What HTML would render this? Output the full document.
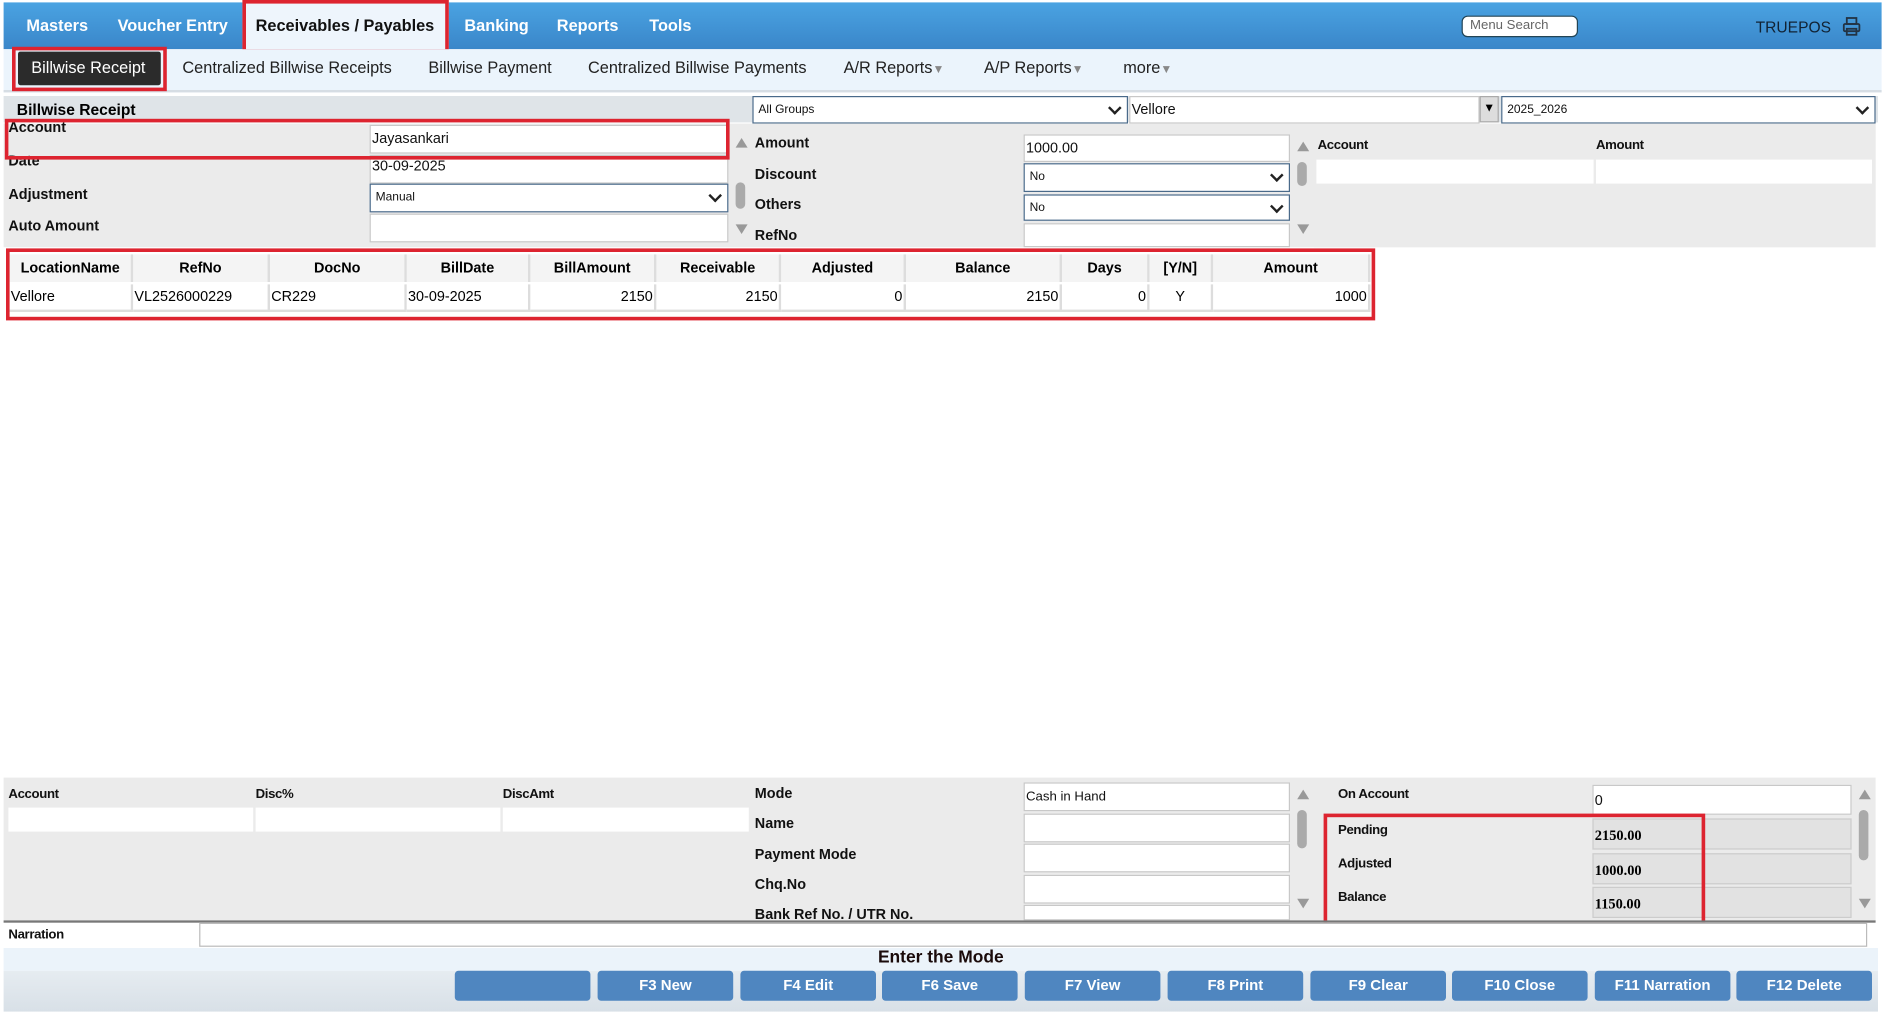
<!DOCTYPE html>
<html><head><meta charset="utf-8"><style>
*{box-sizing:border-box;margin:0;padding:0}
html,body{width:1882px;height:1012px;overflow:hidden;background:#fff;font-family:"Liberation Sans",Arial,sans-serif}
#w{position:absolute;left:0;top:0;width:1568px;height:843px;transform:scale(1.2);transform-origin:0 0;background:#fff}
.a{position:absolute}
.nav{color:#fff;font-weight:bold;font-size:13.6px;top:14px}
.sub{font-size:13.6px;color:#222;top:49px}
.lb{font-size:12px;font-weight:bold;color:#111}
.sl{font-size:11px;font-weight:bold;color:#111;letter-spacing:-0.3px}
.in{background:#fff;border:1px solid #c8c8c8;font-size:12px;padding:3px 1px;color:#111}
.sel{background:#fff;border:1px solid #4a6a8a;font-size:10px;padding:5px 4px;color:#111}
.sel:after{content:"";position:absolute;right:6px;top:5px;width:6px;height:6px;border-right:2px solid #222;border-bottom:2px solid #222;transform:rotate(45deg)}
.red{border:3px solid #dd2430}
.sb{position:absolute;width:10px}
.up,.dn{position:absolute;left:1px;width:0;height:0;border-left:5px solid transparent;border-right:5px solid transparent}
.up{border-bottom:8px solid #999}.dn{border-top:8px solid #999}
.th{position:absolute;top:212px;height:23px;background:#f4f4f4;border-right:2px solid #ddd;font-size:12px;font-weight:bold;text-align:center;line-height:23px}
.td{position:absolute;top:237px;height:23px;background:#fff;border-right:2px solid #ddd;border-bottom:2px solid #ddd;font-size:12px;line-height:20px;padding:0 1px}
.btn{position:absolute;top:809px;width:113px;height:25px;background:#4f86c0;border-radius:3px;color:#fff;font-weight:bold;font-size:12.5px;text-align:center;line-height:25px}
</style></head><body><div id="w">
<div class="a" style="left:3px;top:2px;width:1565px;height:39px;background:linear-gradient(#4aa3e2,#3a86c9)"></div>
<div class="a nav" style="left:22px">Masters</div>
<div class="a nav" style="left:98px">Voucher Entry</div>
<div class="a red" style="left:202px;top:0;width:172px;height:44px;background:#eef5fc"></div>
<div class="a nav" style="left:213px;color:#111">Receivables / Payables</div>
<div class="a nav" style="left:387px">Banking</div>
<div class="a nav" style="left:464px">Reports</div>
<div class="a nav" style="left:541px">Tools</div>
<div class="a" style="left:1218px;top:13px;width:97px;height:18px;background:#fff;border:1px solid #245;border-radius:5px;font-size:11px;color:#666;padding:1px 6px">Menu Search</div>
<div class="a" style="left:1463px;top:15px;font-size:13px;color:#123">TRUEPOS</div>
<svg class="a" style="left:1535px;top:14px" width="16" height="16" viewBox="0 0 16 16" fill="none" stroke="#234" stroke-width="1.5"><rect x="4" y="1" width="8" height="5"/><rect x="1.5" y="6" width="13" height="6" rx="1"/><rect x="4" y="10" width="8" height="5"/></svg>
<div class="a" style="left:3px;top:41px;width:1565px;height:36px;background:#ebf4fc;border-bottom:2px solid #d6dde4"></div>
<div class="a red" style="left:10px;top:39px;width:129px;height:37px"></div>
<div class="a" style="left:15px;top:43px;width:119px;height:28px;background:#2b2b2b;border-radius:2px"></div>
<div class="a sub" style="left:26px;color:#fff">Billwise Receipt</div>
<div class="a sub" style="left:152px">Centralized Billwise Receipts</div>
<div class="a sub" style="left:357px">Billwise Payment</div>
<div class="a sub" style="left:490px">Centralized Billwise Payments</div>
<div class="a sub" style="left:703px">A/R Reports<span style="color:#888;font-size:10px">▼</span></div>
<div class="a sub" style="left:820px">A/P Reports<span style="color:#888;font-size:10px">▼</span></div>
<div class="a sub" style="left:936px">more<span style="color:#888;font-size:10px">▼</span></div>
<div class="a" style="left:3px;top:80px;width:1562px;height:22px;background:#dfe4e8"></div>
<div class="a" style="left:14px;top:84px;font-size:13px;font-weight:bold">Billwise Receipt</div>
<div class="a sel" style="left:627px;top:80px;width:313px;height:23px">All Groups</div>
<div class="a in" style="left:941px;top:80px;width:292px;height:23px">Vellore</div>
<div class="a" style="left:1233px;top:80px;width:16px;height:22px;background:#ddd;border:1px solid #aaa;font-size:10px;text-align:center;line-height:20px">▼</div>
<div class="a sel" style="left:1251px;top:80px;width:312px;height:23px">2025_2026</div>
<div class="a" style="left:3px;top:103px;width:1560px;height:103px;background:#ebebeb"></div>
<div class="a" style="left:7px;top:102px;height:14px;overflow:hidden"><div class="lb" style="margin-top:-3px">Account</div></div>
<div class="a" style="left:7px;top:129px;height:14px;overflow:hidden"><div class="lb" style="margin-top:-2px">Date</div></div>
<div class="a lb" style="left:7px;top:155px">Adjustment</div>
<div class="a lb" style="left:7px;top:181px">Auto Amount</div>
<div class="a in" style="left:308px;top:104px;width:299px;height:24px">Jayasankari</div>
<div class="a in" style="left:308px;top:129px;width:299px;height:24px;padding-top:1px">30-09-2025</div>
<div class="a sel" style="left:308px;top:153px;width:299px;height:24px">Manual</div>
<div class="a in" style="left:308px;top:178px;width:299px;height:24px"></div>
<div class="a red" style="left:4px;top:99px;width:604px;height:34px"></div>
<div class="sb" style="left:612px;top:115px;height:80px"><div class="up" style="top:0"></div><div style="position:absolute;left:1px;top:37px;width:8px;height:22px;background:#aaa;border-radius:4px"></div><div class="dn" style="top:72px"></div></div>
<div class="a lb" style="left:629px;top:112px">Amount</div>
<div class="a lb" style="left:629px;top:138px">Discount</div>
<div class="a lb" style="left:629px;top:163px">Others</div>
<div class="a lb" style="left:629px;top:189px">RefNo</div>
<div class="a in" style="left:853px;top:112px;width:222px;height:23px">1000.00</div>
<div class="a sel" style="left:853px;top:136px;width:222px;height:24px">No</div>
<div class="a sel" style="left:853px;top:162px;width:222px;height:22px">No</div>
<div class="a in" style="left:853px;top:186px;width:222px;height:20px"></div>
<div class="sb" style="left:1080px;top:118px;height:80px"><div class="up" style="top:0"></div><div style="position:absolute;left:1px;top:17px;width:8px;height:20px;background:#aaa;border-radius:4px"></div><div class="dn" style="top:69px"></div></div>
<div class="a" style="left:1095px;top:103px;width:468px;height:103px;background:#ebebeb"></div>
<div class="a sl" style="left:1098px;top:115px">Account</div>
<div class="a sl" style="left:1330px;top:115px">Amount</div>
<div class="a" style="left:1097px;top:133px;width:231px;height:20px;background:#fff"></div>
<div class="a" style="left:1330px;top:133px;width:230px;height:20px;background:#fff"></div>
<div class="th" style="left:8px;width:103px">LocationName</div>
<div class="th" style="left:111px;width:114px">RefNo</div>
<div class="th" style="left:225px;width:114px">DocNo</div>
<div class="th" style="left:339px;width:103px">BillDate</div>
<div class="th" style="left:442px;width:105px">BillAmount</div>
<div class="th" style="left:547px;width:104px">Receivable</div>
<div class="th" style="left:651px;width:104px">Adjusted</div>
<div class="th" style="left:755px;width:130px">Balance</div>
<div class="th" style="left:885px;width:73px">Days</div>
<div class="th" style="left:958px;width:53px">[Y/N]</div>
<div class="th" style="left:1011px;width:131px">Amount</div>
<div class="td" style="left:8px;width:103px">Vellore</div>
<div class="td" style="left:111px;width:114px">VL2526000229</div>
<div class="td" style="left:225px;width:114px">CR229</div>
<div class="td" style="left:339px;width:103px">30-09-2025</div>
<div class="td" style="left:442px;width:105px;text-align:right">2150</div>
<div class="td" style="left:547px;width:104px;text-align:right">2150</div>
<div class="td" style="left:651px;width:104px;text-align:right">0</div>
<div class="td" style="left:755px;width:130px;text-align:right">2150</div>
<div class="td" style="left:885px;width:73px;text-align:right">0</div>
<div class="td" style="left:958px;width:53px;text-align:center">Y</div>
<div class="td" style="left:1011px;width:131px;text-align:right">1000</div>
<div class="a red" style="left:5px;top:207px;width:1141px;height:60px"></div>
<div class="a" style="left:3px;top:648px;width:1560px;height:120px;background:#ebebeb"></div>
<div class="a sl" style="left:7px;top:656px">Account</div>
<div class="a sl" style="left:213px;top:656px">Disc%</div>
<div class="a sl" style="left:419px;top:656px">DiscAmt</div>
<div class="a" style="left:7px;top:673px;width:204px;height:20px;background:#fff"></div>
<div class="a" style="left:213px;top:673px;width:204px;height:20px;background:#fff"></div>
<div class="a" style="left:419px;top:673px;width:205px;height:20px;background:#fff"></div>
<div class="a lb" style="left:629px;top:654px">Mode</div>
<div class="a lb" style="left:629px;top:679px">Name</div>
<div class="a lb" style="left:629px;top:705px">Payment Mode</div>
<div class="a lb" style="left:629px;top:730px">Chq.No</div>
<div class="a lb" style="left:629px;top:755px">Bank Ref No. / UTR No.</div>
<div class="a in" style="left:853px;top:652px;width:222px;height:24px;font-size:11px;padding-top:5px">Cash in Hand</div>
<div class="a in" style="left:853px;top:678px;width:222px;height:24px"></div>
<div class="a in" style="left:853px;top:703px;width:222px;height:24px"></div>
<div class="a in" style="left:853px;top:729px;width:222px;height:24px"></div>
<div class="a in" style="left:853px;top:754px;width:222px;height:13px"></div>
<div class="sb" style="left:1080px;top:658px;height:100px"><div class="up" style="top:0"></div><div style="position:absolute;left:1px;top:17px;width:8px;height:32px;background:#aaa;border-radius:4px"></div><div class="dn" style="top:91px"></div></div>
<div class="a sl" style="left:1115px;top:656px">On Account</div>
<div class="a in" style="left:1327px;top:654px;width:216px;height:25px;padding-top:5px">0</div>
<div class="a sl" style="left:1115px;top:686px">Pending</div>
<div class="a sl" style="left:1115px;top:714px">Adjusted</div>
<div class="a sl" style="left:1115px;top:742px">Balance</div>
<div class="a" style="left:1327px;top:682px;width:216px;height:26px;background:#e2e2e2;border:1px solid #ccc;font-family:'Liberation Serif',serif;font-weight:bold;font-size:12px;padding:6px 1px">2150.00</div>
<div class="a" style="left:1327px;top:711px;width:216px;height:26px;background:#e2e2e2;border:1px solid #ccc;font-family:'Liberation Serif',serif;font-weight:bold;font-size:12px;padding:6px 1px">1000.00</div>
<div class="a" style="left:1327px;top:739px;width:216px;height:26px;background:#e2e2e2;border:1px solid #ccc;font-family:'Liberation Serif',serif;font-weight:bold;font-size:12px;padding:6px 1px">1150.00</div>
<div class="a red" style="left:1103px;top:678px;width:318px;height:94px"></div>
<div class="sb" style="left:1548px;top:658px;height:100px"><div class="up" style="top:0"></div><div style="position:absolute;left:1px;top:17px;width:8px;height:42px;background:#aaa;border-radius:4px"></div><div class="dn" style="top:91px"></div></div>
<div class="a" style="left:3px;top:767px;width:1560px;height:2px;background:#777"></div>
<div class="a" style="left:3px;top:769px;width:1562px;height:22px;background:#fff"></div>
<div class="a sl" style="left:7px;top:773px">Narration</div>
<div class="a" style="left:166px;top:769px;width:1390px;height:20px;background:#fff;border:1px solid #bbb"></div>
<div class="a" style="left:3px;top:790px;width:1562px;height:19px;background:#ebf3fa"></div>
<div class="a" style="left:0;top:790px;width:1568px;text-align:center;font-size:14.5px;font-weight:bold;color:#1a0a0a">Enter the Mode</div>
<div class="a" style="left:3px;top:809px;width:1562px;height:34px;background:linear-gradient(#e6ecf1,#d8e0e7)"></div>
<div class="btn" style="left:379px"></div>
<div class="btn" style="left:498px">F3 New</div>
<div class="btn" style="left:617px">F4 Edit</div>
<div class="btn" style="left:735px">F6 Save</div>
<div class="btn" style="left:854px">F7 View</div>
<div class="btn" style="left:973px">F8 Print</div>
<div class="btn" style="left:1092px">F9 Clear</div>
<div class="btn" style="left:1210px">F10 Close</div>
<div class="btn" style="left:1329px">F11 Narration</div>
<div class="btn" style="left:1447px">F12 Delete</div>
</div></body></html>
